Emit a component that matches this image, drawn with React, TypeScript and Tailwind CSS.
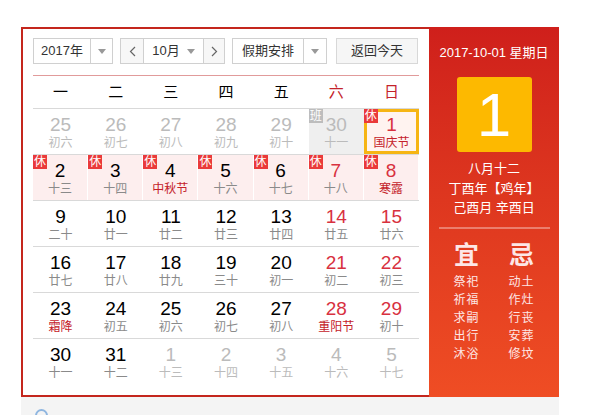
import React from "react";

type Day = {
  n: number;
  lunar: string;
  other?: boolean;
  weekend?: boolean;
  fest?: boolean;
  badge?: "休" | "班";
  selected?: boolean;
};

const weeks: Day[][] = [
  [
    { n: 25, lunar: "初六", other: true },
    { n: 26, lunar: "初七", other: true },
    { n: 27, lunar: "初八", other: true },
    { n: 28, lunar: "初九", other: true },
    { n: 29, lunar: "初十", other: true },
    { n: 30, lunar: "十一", other: true, badge: "班" },
    { n: 1, lunar: "国庆节", weekend: true, fest: true, badge: "休", selected: true },
  ],
  [
    { n: 2, lunar: "十三", badge: "休" },
    { n: 3, lunar: "十四", badge: "休" },
    { n: 4, lunar: "中秋节", fest: true, badge: "休" },
    { n: 5, lunar: "十六", badge: "休" },
    { n: 6, lunar: "十七", badge: "休" },
    { n: 7, lunar: "十八", weekend: true, badge: "休" },
    { n: 8, lunar: "寒露", weekend: true, fest: true, badge: "休" },
  ],
  [
    { n: 9, lunar: "二十" },
    { n: 10, lunar: "廿一" },
    { n: 11, lunar: "廿二" },
    { n: 12, lunar: "廿三" },
    { n: 13, lunar: "廿四" },
    { n: 14, lunar: "廿五", weekend: true },
    { n: 15, lunar: "廿六", weekend: true },
  ],
  [
    { n: 16, lunar: "廿七" },
    { n: 17, lunar: "廿八" },
    { n: 18, lunar: "廿九" },
    { n: 19, lunar: "三十" },
    { n: 20, lunar: "初一" },
    { n: 21, lunar: "初二", weekend: true },
    { n: 22, lunar: "初三", weekend: true },
  ],
  [
    { n: 23, lunar: "霜降", fest: true },
    { n: 24, lunar: "初五" },
    { n: 25, lunar: "初六" },
    { n: 26, lunar: "初七" },
    { n: 27, lunar: "初八" },
    { n: 28, lunar: "重阳节", weekend: true, fest: true },
    { n: 29, lunar: "初十", weekend: true },
  ],
  [
    { n: 30, lunar: "十一" },
    { n: 31, lunar: "十二" },
    { n: 1, lunar: "十三", other: true },
    { n: 2, lunar: "十四", other: true },
    { n: 3, lunar: "十五", other: true },
    { n: 4, lunar: "十六", other: true },
    { n: 5, lunar: "十七", other: true },
  ],
];

const Caret = () => (
  <span className="inline-block w-0 h-0 border-x-[4px] border-x-transparent border-t-[5px] border-t-[#999]" />
);

const Cell = ({ d }: { d: Day }) => {
  let bg = "bg-white";
  if (d.badge === "班") bg = "bg-[#efefef]";
  else if (d.selected) bg = "bg-[#fff3f0]";
  else if (d.badge === "休") bg = "bg-[#fdeeee] border-r border-white";

  const numColor = d.other ? "text-[#bbbbbb]" : d.weekend ? "text-[#d8313f]" : "text-black";
  const lunarColor = d.other
    ? "text-[#bbbbbb]"
    : d.fest
    ? "text-[#c4222a]"
    : "text-[#8a8a8a]";

  return (
    <div
      className={`relative h-[45px] flex flex-col items-center ${bg} ${
        d.selected ? "border-[3px] border-[#f6b514]" : ""
      }`}
    >
      {d.badge && (
        <span
          className={`absolute ${d.selected ? "-top-[3px] -left-[3px]" : "top-0 left-0"} w-[14px] h-[14px] text-[12px] leading-[14px] text-center text-white ${
            d.badge === "班" ? "bg-[#bdbdbd]" : "bg-[#ea3a3a]"
          }`}
        >
          {d.badge}
        </span>
      )}
      <div className={`${d.selected ? "pt-[3px]" : "pt-[6px]"} text-[19px] leading-[20px] ${numColor}`}>
        {d.n}
      </div>
      <div className={`text-[12px] leading-[16px] ${lunarColor}`}>{d.lunar}</div>
    </div>
  );
};

export default function App() {
  const font = { fontFamily: '"Liberation Sans", "Noto Sans CJK SC", sans-serif' };
  return (
    <div className="w-[594px] h-[415px] bg-white overflow-hidden" style={font}>
      <div className="pt-[27px] pl-[21px]">
        <div className="flex">
          {/* calendar */}
          <div className="w-[408px] h-[370px] border-2 border-r-0 border-[#c4261d] px-[10px] pt-[9px]">
            <div className="flex items-center h-[26px] text-[13px] text-[#333]">
              <div className="flex w-[80px] h-[26px] border border-[#d0d0d0] bg-white">
                <div className="w-[56px] flex items-center justify-center">2017年</div>
                <div className="flex-1 border-l border-[#d0d0d0] flex items-center justify-center">
                  <Caret />
                </div>
              </div>
              <div className="flex ml-[7px] w-[105px] h-[26px] border border-[#d0d0d0]">
                <div className="w-[23px] border-r border-[#d0d0d0] bg-[#f7f7f7] flex items-center justify-center text-[#666]">
                  <svg width="7" height="11" viewBox="0 0 7 11">
                    <path d="M6 1 L1.5 5.5 L6 10" fill="none" stroke="#666" strokeWidth="1.2" />
                  </svg>
                </div>
                <div className="flex-1 flex items-center justify-center gap-[7px] bg-white">
                  <span>10月</span>
                  <Caret />
                </div>
                <div className="w-[21px] border-l border-[#d0d0d0] bg-[#f7f7f7] flex items-center justify-center">
                  <svg width="7" height="11" viewBox="0 0 7 11">
                    <path d="M1 1 L5.5 5.5 L1 10" fill="none" stroke="#666" strokeWidth="1.2" />
                  </svg>
                </div>
              </div>
              <div className="flex ml-[7px] w-[95px] h-[26px] border border-[#d0d0d0] bg-white">
                <div className="w-[70px] flex items-center justify-center">假期安排</div>
                <div className="flex-1 border-l border-[#d0d0d0] flex items-center justify-center">
                  <Caret />
                </div>
              </div>
              <div className="ml-[9px] w-[82px] h-[26px] border border-[#d8d8d8] bg-[#f6f6f6] flex items-center justify-center">
                返回今天
              </div>
            </div>

            <div className="mt-[11px] border-t border-[#e19b9b] border-b border-b-[#d9d9d9] h-[34px] grid grid-cols-7 items-center text-[15px]">
              {["一", "二", "三", "四", "五", "六", "日"].map((w, i) => (
                <div key={w} className={`text-center ${i >= 5 ? "text-[#c4222a]" : "text-black"}`}>
                  {w}
                </div>
              ))}
            </div>

            {weeks.map((wk, i) => (
              <div
                key={i}
                className={`grid grid-cols-7 ${i < weeks.length - 1 ? "border-b border-[#d9d9d9]" : ""}`}
              >
                {wk.map((d, j) => (
                  <Cell key={j} d={d} />
                ))}
              </div>
            ))}
          </div>

          {/* side panel */}
          <div className="w-[130px] h-[370px] bg-gradient-to-b from-[#cf1f1b] to-[#ef4d24] flex flex-col items-center text-white">
            <div className="mt-[16px] text-[13px] leading-[20px]">2017-10-01 星期日</div>
            <div className="mt-[14px] w-[75px] h-[75px] rounded-[3px] bg-[#fdb900] flex items-center justify-center text-[62px] leading-none">
              1
            </div>
            <div className="mt-[7px] text-[13px] leading-[19.5px] text-center">
              <div>八月十二</div>
              <div>丁酉年【鸡年】</div>
              <div>己酉月 辛酉日</div>
            </div>
            <div className="mt-[9px] w-[111px] h-[2px] bg-white/35" />
            <div className="mt-[12px] w-[110px] grid grid-cols-2 text-[#fde6e6]">
              {[
                { t: "宜", items: ["祭祀", "祈福", "求嗣", "出行", "沐浴"] },
                { t: "忌", items: ["动土", "作灶", "行丧", "安葬", "修坟"] },
              ].map((c) => (
                <div key={c.t} className="flex flex-col items-center">
                  <div className="text-[25px] leading-[28px] font-bold">{c.t}</div>
                  <div className="mt-[4px] text-[12px] leading-[18px] tracking-[1px] text-center">
                    {c.items.map((s) => (
                      <div key={s}>{s}</div>
                    ))}
                  </div>
                </div>
              ))}
            </div>
          </div>
        </div>
        <div className="w-[538px] h-[30px] bg-[#f4f4f4] relative">
          <span className="absolute left-[14px] top-[12px] w-[13px] h-[13px] rounded-full border-2 border-[#8fb6e0]" />
        </div>
      </div>
    </div>
  );
}
